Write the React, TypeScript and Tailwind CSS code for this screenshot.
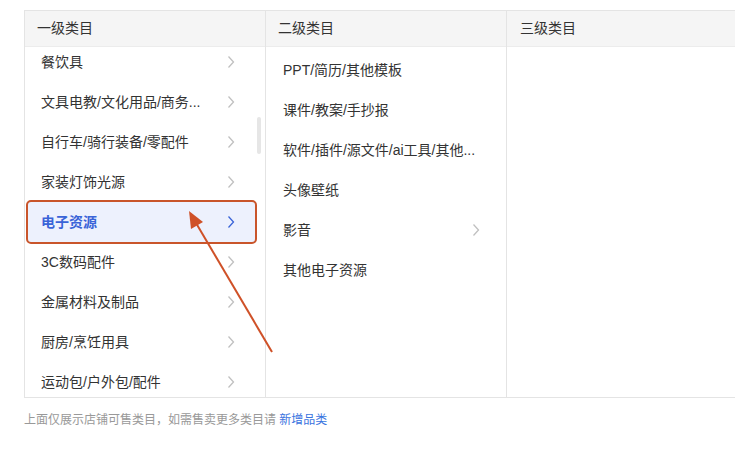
import React from "react";

const font = { fontFamily: '"Liberation Sans", "Noto Sans CJK SC", sans-serif' };

function Chevron({ active }: { active?: boolean }) {
  return (
    <svg width="8" height="14" viewBox="0 0 8 14" className="shrink-0">
      <path d="M1.5 1.5 L6.5 7 L1.5 12.5" fill="none" stroke={active ? "#3a64d8" : "#c0c0c0"} strokeWidth="1.3" />
    </svg>
  );
}

const level1 = [
  "餐饮具",
  "文具电教/文化用品/商务...",
  "自行车/骑行装备/零配件",
  "家装灯饰光源",
  "电子资源",
  "3C数码配件",
  "金属材料及制品",
  "厨房/烹饪用具",
  "运动包/户外包/配件",
];

const level2: { t: string; c?: boolean }[] = [
  { t: "PPT/简历/其他模板" },
  { t: "课件/教案/手抄报" },
  { t: "软件/插件/源文件/ai工具/其他..." },
  { t: "头像壁纸" },
  { t: "影音", c: true },
  { t: "其他电子资源" },
];

export default function App() {
  return (
    <div className="relative w-[735px] h-[456px] overflow-hidden bg-white text-[#333]" style={font}>
      <div className="pt-[10px] pl-[24px]">
        <div className="flex w-[740px] h-[388px] border border-r-0 border-[#e4e4e4]">
          {/* column 1 */}
          <div className="w-[241px] flex flex-col border-r border-[#e4e4e4]">
            <div className="h-[36px] shrink-0 bg-[#f5f5f5] border-b border-[#ececec] flex items-center pl-[12px] text-[14px] text-[#333]">
              一级类目
            </div>
            <div className="relative flex-1 overflow-hidden">
              <div className="-mt-[5px] flex flex-col">
                {level1.map((t) => {
                  const active = t === "电子资源";
                  return active ? (
                    <div key={t} className="h-[40px] flex items-center">
                      <div className="ml-[1px] w-[231px] h-[44px] rounded-[5px] border-2 border-[#c9552b] bg-[#edf1fd] flex items-center justify-between pl-[13px] pr-[20px]">
                        <span className="text-[14px] font-bold text-[#3a64d8]">{t}</span>
                        <Chevron active />
                      </div>
                    </div>
                  ) : (
                    <div key={t} className="h-[40px] flex items-center justify-between pl-[16px] pr-[30px]">
                      <span className="text-[14px] text-[#333]">{t}</span>
                      <Chevron />
                    </div>
                  );
                })}
              </div>
              <div className="absolute right-[4px] top-[70px] w-[4px] h-[37px] rounded-[2px] bg-[#e6e6e6]" />
            </div>
          </div>
          {/* column 2 */}
          <div className="w-[241px] flex flex-col border-r border-[#e4e4e4]">
            <div className="h-[36px] shrink-0 bg-[#f5f5f5] border-b border-[#ececec] flex items-center pl-[12px] text-[14px] text-[#333]">
              二级类目
            </div>
            <div className="pt-[3px] flex flex-col">
              {level2.map((r) => (
                <div key={r.t} className="h-[40px] flex items-center justify-between pl-[17px] pr-[26px]">
                  <span className="text-[14px] text-[#333]">{r.t}</span>
                  {r.c && <Chevron />}
                </div>
              ))}
            </div>
          </div>
          {/* column 3 */}
          <div className="flex-1 flex flex-col">
            <div className="h-[36px] shrink-0 bg-[#f5f5f5] border-b border-[#ececec] flex items-center pl-[13px] text-[14px] text-[#333]">
              三级类目
            </div>
          </div>
        </div>
        <div className="mt-[13px] text-[12px] text-[#999]">
          上面仅展示店铺可售类目，如需售卖更多类目请 <span className="text-[#3a74e0]">新增品类</span>
        </div>
      </div>
      {/* annotation arrow */}
      <svg className="absolute left-0 top-0 pointer-events-none" width="735" height="456">
        <line x1="272" y1="352" x2="196" y2="223" stroke="#cf5128" strokeWidth="2" />
        <polygon points="189,211 191,229 203,222" fill="#cf5128" />
      </svg>
    </div>
  );
}
